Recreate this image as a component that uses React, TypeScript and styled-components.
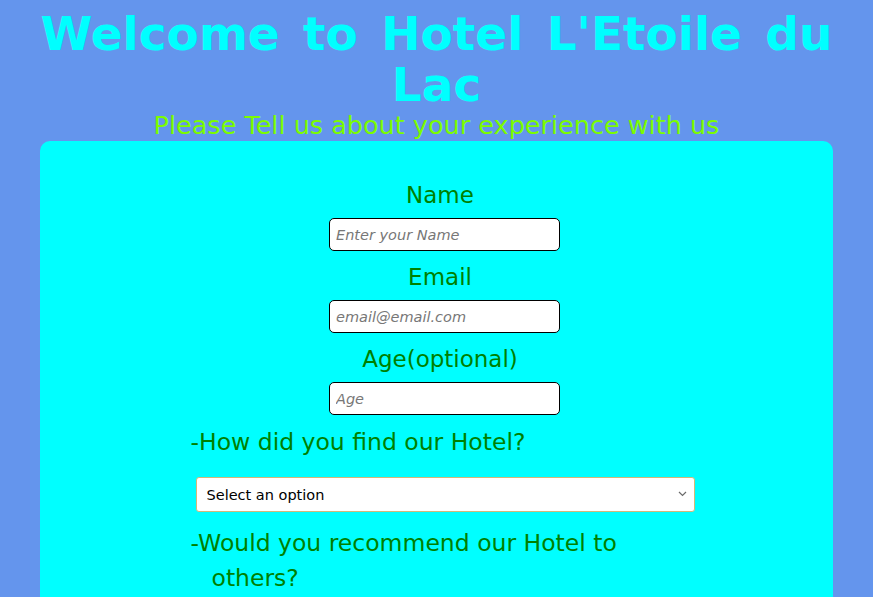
import React from "react";
import styled, { createGlobalStyle } from "styled-components";

const Global = createGlobalStyle`
  html, body { margin: 0; padding: 0; }
  body {
    background: #6495ed;
    font-family: "Comic Sans MS", "DejaVu Sans", sans-serif;
    overflow: hidden;
  }
`;

const Page = styled.div`
  display: flex;
  flex-direction: column;
  align-items: center;
  padding: 0 40px;
  min-height: 700px;
`;

const Title = styled.h1`
  margin: 8px 0 0;
  font-size: 47px;
  font-weight: bold;
  line-height: 51px;
  color: #00ffff;
  text-align: center;
  word-spacing: 7px;
`;

const Subtitle = styled.p`
  margin: 0;
  font-size: 25.5px;
  line-height: 30px;
  color: #7cfc00;
  text-align: center;
`;

const Card = styled.form`
  align-self: stretch;
  margin-top: 1px;
  background: #00ffff;
  border-radius: 10px;
  flex: 1;
  display: flex;
  flex-direction: column;
  align-items: center;
  padding-top: 37px;
`;

const Field = styled.div`
  display: flex;
  flex-direction: column;
  align-items: center;
  padding-left: 7px;
  & + & { margin-top: 9px; }
`;

const Label = styled.label`
  font-size: 23px;
  line-height: 34px;
  color: #008000;
  margin-bottom: 6px;
`;

const Input = styled.input`
  box-sizing: border-box;
  width: 231px;
  height: 33px;
  margin-left: 9px;
  border: 1px solid #000;
  border-radius: 5px;
  background: #fff;
  padding: 0 6px;
  font-family: inherit;
  font-size: 14.5px;
  font-style: italic;
  &::placeholder { color: #777; }
`;

const Section = styled.div`
  width: 508px;
  margin-top: 10px;
  margin-left: 16px;
  display: flex;
  flex-direction: column;
`;

const Question = styled.label`
  font-size: 23.5px;
  line-height: 35px;
  color: #008000;
  padding-left: 21px;
  text-indent: -21px;
  max-width: 450px;
`;

const SelectWrap = styled.div`
  position: relative;
  width: 499px;
  margin: 17px 0 14px 5px;
`;

const Select = styled.select`
  box-sizing: border-box;
  display: block;
  width: 100%;
  height: 35px;
  border: 1px solid #d4b878;
  border-radius: 3px;
  background: #fff;
  padding: 0 10px;
  font-family: inherit;
  font-size: 14.5px;
  color: #000;
  appearance: none;
  -webkit-appearance: none;
`;

const Chevron = styled.svg`
  position: absolute;
  right: 8px;
  top: 14px;
  width: 9px;
  height: 6px;
  pointer-events: none;
`;

export default function App() {
  return (
    <>
      <Global />
      <Page>
        <Title>Welcome to Hotel L'Etoile du Lac</Title>
        <Subtitle>Please Tell us about your experience with us</Subtitle>
        <Card onSubmit={(e) => e.preventDefault()}>
          <Field>
            <Label htmlFor="name">Name</Label>
            <Input id="name" placeholder="Enter your Name" />
          </Field>
          <Field>
            <Label htmlFor="email">Email</Label>
            <Input id="email" type="email" placeholder="email@email.com" />
          </Field>
          <Field>
            <Label htmlFor="age">Age(optional)</Label>
            <Input id="age" type="number" placeholder="Age" />
          </Field>
          <Section>
            <Question htmlFor="find">-How did you find our Hotel?</Question>
            <SelectWrap>
              <Select id="find" defaultValue="">
                <option value="" disabled>Select an option</option>
                <option>Friends</option>
                <option>Internet</option>
                <option>Advertisement</option>
              </Select>
              <Chevron viewBox="0 0 9 6">
                <path d="M1 1l3.5 3.5L8 1" fill="none" stroke="#6b6b6b" strokeWidth="1.2" />
              </Chevron>
            </SelectWrap>
            <Question>-Would you recommend our Hotel to others?</Question>
          </Section>
        </Card>
      </Page>
    </>
  );
}
